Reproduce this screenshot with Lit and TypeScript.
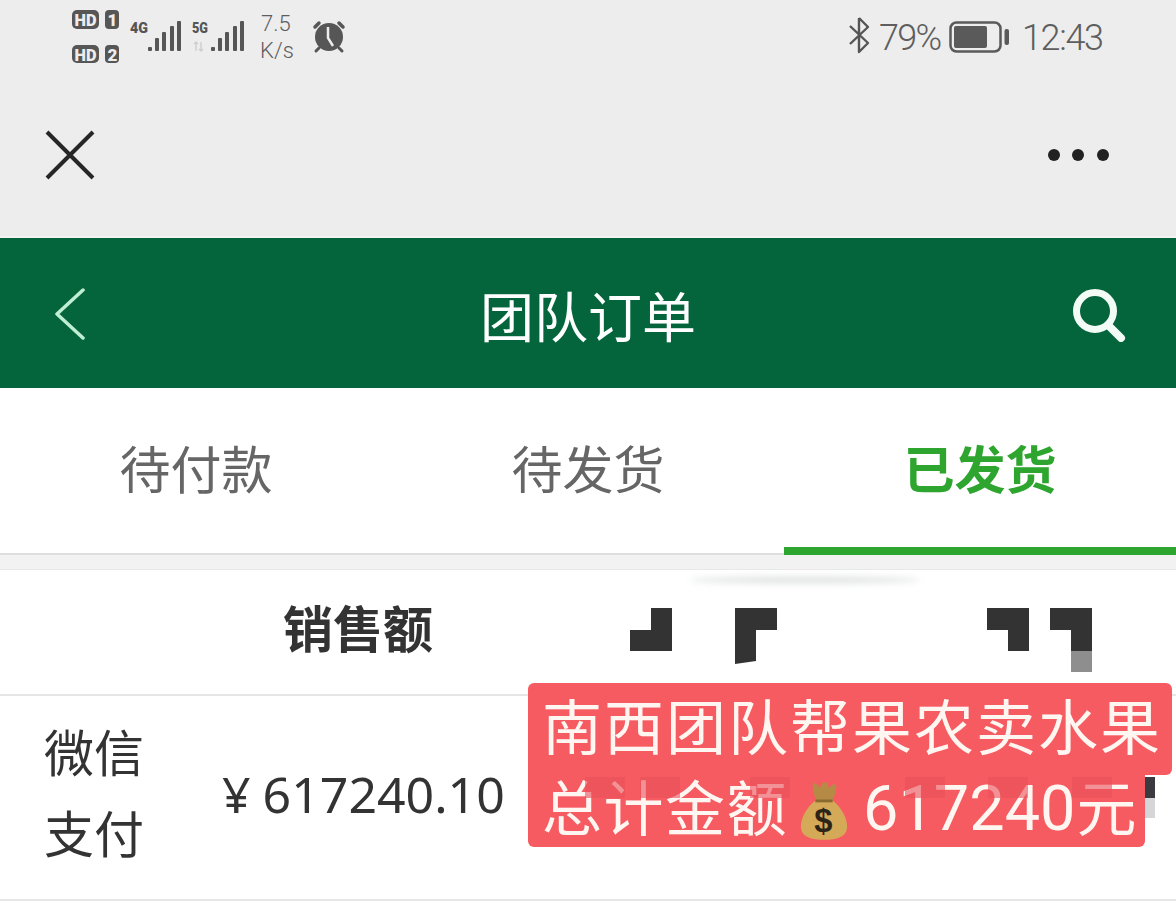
import { LitElement, html, css, svg } from "lit";
import { customElement } from "lit/decorators.js";

const bars = (x0: number) => [
  [0, 47], [7, 38], [14, 32], [22, 26], [29, 21],
].map(([dx, top]) => svg`<rect x=${x0 + dx} y=${top} width="4" height=${51 - top} rx="1" fill="#565656"/>`);

@customElement("app-root")
export class AppRoot extends LitElement {
  static styles = css`
    :host { display: block; width: 1176px; height: 903px; overflow: hidden; position: relative; background: #fff;
      font-family: "Noto Sans CJK SC", "Noto Sans", sans-serif; }
    .status { height: 87px; background: #ededed; position: relative; display: flex; color: #5a5a5a; }
    .status svg.full { width: 1176px; height: 87px; display: block; }
    .status text { font-family: Roboto, sans-serif; fill: #5e5e5e; }
    .status .hd { font-weight: 900; fill: #ededed; font-size: 17px; }
    .status .net { font-weight: 900; font-size: 15px; fill: #555; }
    .status .speed { font-weight: 300; font-size: 22px; }
    .status .big { font-weight: 300; font-size: 36px; }
    .nav { height: 151px; background: #ededed; display: flex; align-items: center; justify-content: space-between; padding: 0 67px 13px 44px; box-sizing: border-box; border-bottom: 2px solid #f1f4f2; }
    .nav svg { display: block; }
    .head { height: 150px; background: #04653c; display: grid; grid-template-columns: 1fr auto 1fr; align-items: center; padding: 0 50px; color: #fff; }
    .head h1 { margin: 3px 0 0; font-size: 54px; line-height: 60px; font-weight: 400; }
    .head svg { display: block; }
    .head .back { margin: 1px 0 0 2px; }
    .head .search { justify-self: end; margin-top: 3px; }
    .tabs { height: 167px; display: grid; grid-template-columns: repeat(3, 1fr); background: #fff; border-bottom: 2px solid #dedede; box-sizing: border-box; }
    .tab { display: flex; align-items: center; justify-content: center; font-size: 51px; color: #666; padding-bottom: 8px; box-sizing: border-box; }
    .tab.on { color: #2ea52f; font-weight: 700; border-bottom: 8px solid #2ea52f; margin-bottom: -2px; padding-bottom: 2px; height: 167px; }
    .gap { height: 15px; background: #f2f2f2; border-bottom: 1px solid #e8e8e8; box-sizing: border-box; }
    .sum { height: 126px; display: flex; align-items: center; padding-left: 283px; border-bottom: 2px solid #e6e6e6; box-sizing: border-box; position: relative; }
    .sum b { font-size: 50px; line-height: 60px; color: #333; font-weight: 700; margin-top: -13px; }
    .smudge { position: absolute; left: 690px; top: 6px; width: 230px; height: 8px; background: #e4e6e6; border-radius: 50%; filter: blur(3px); }
    .blocks { position: absolute; left: 630px; top: 38px; display: block; }
    .row { height: 205px; display: flex; align-items: center; padding: 0 0 10px 44px; border-bottom: 2px solid #e6e6e6; box-sizing: border-box; }
    .pay { font-size: 50px; line-height: 81px; color: #333; width: 178px; flex: none; margin-top: -4px; }
    .amt { font-family: "Noto Sans", sans-serif; font-size: 50px; color: #333; line-height: 60px; white-space: nowrap; margin-top: 2px; }
    .amt i { font-style: normal; margin-right: 12px; }
    .note { position: absolute; left: 528px; top: 683px; display: flex; flex-direction: column; align-items: flex-start; }
    .bar { background: #f65b61; color: #fff6f2; font-size: 60px; letter-spacing: 2px; white-space: nowrap; display: flex; align-items: center; padding: 0 6px 0 14px; box-sizing: border-box; border-radius: 6px; }
    .bar.a { width: 644px; height: 92px; border-bottom-left-radius: 0; padding-bottom: 12px; }
    .bar.b { width: 617px; height: 72px; border-top-left-radius: 0; border-top-right-radius: 0; position: relative; letter-spacing: 1.5px; padding-bottom: 14px; }
    .bar.b span.n { font-family: Roboto, sans-serif; font-weight: 400; font-size: 63px; letter-spacing: 0; margin: 8px 1px 0 15px; }
    .bar svg { flex: none; margin: 14px 0 0 12px; }
    .bar text { font-family: "Liberation Sans", sans-serif; font-weight: 700; font-size: 34px; fill: #2d2418; }
    .patch { position: absolute; top: 2px; height: 21px; background: #ea5058; opacity: .6; }
    .stub { position: absolute; left: 617px; top: 2px; width: 10px; height: 41px; background: linear-gradient(#3a3a40 50%, #d6d6d8 50%); }
  `;

  render() {
    return html`
      <div class="status">
        <svg class="full" viewBox="0 0 1176 87">
          <rect x="72" y="10" width="27" height="19" rx="5" fill="#565656"/>
          <text x="74.5" y="25.500" class="hd" textLength="22" lengthAdjust="spacingAndGlyphs">HD</text>
          <rect x="105" y="10" width="14" height="19" rx="4" fill="#565656"/>
          <text x="107.500" y="25.500" class="hd">1</text>
          <rect x="72" y="45" width="27" height="18" rx="5" fill="#565656"/>
          <text x="74.5" y="60.500" class="hd" textLength="22" lengthAdjust="spacingAndGlyphs">HD</text>
          <rect x="105" y="45" width="14" height="18" rx="4" fill="#565656"/>
          <text x="107.500" y="60.500" class="hd">2</text>
          <text x="130" y="33" class="net" textLength="18" lengthAdjust="spacingAndGlyphs">4G</text>
          ${bars(148)}
          <text x="192" y="33" class="net" textLength="16" lengthAdjust="spacingAndGlyphs">5G</text>
          ${bars(211)}
          <path d="M196 42v9M194 44l2-2 2 2M201 51v-9M199 49l2 2 2-2" stroke="#cfcfcf" stroke-width="1.5" fill="none"/>
          <text x="261" y="31" class="speed">7.5</text>
          <text x="260" y="58" class="speed">K/s</text>
          <path d="M315 27l4-4M343 27l-4-4" stroke="#565656" stroke-width="3.5" stroke-linecap="round"/>
          <path d="M319 48l-3 3M339 48l3 3" stroke="#565656" stroke-width="3" stroke-linecap="round"/>
          <circle cx="329" cy="37" r="14" fill="#565656"/>
          <path d="M328 27v11l5 8" stroke="#ededed" stroke-width="2.5" fill="none"/>
          <path d="M859 18v34l9-9-18-17M859 18l9 9-18 17" stroke="#555" stroke-width="2.4" fill="none" stroke-linejoin="round"/>
          <text x="879" y="50" class="big" textLength="63">79%</text>
          <rect x="950.5" y="22.500" width="50" height="29" rx="6" fill="none" stroke="#5a5a5a" stroke-width="2.500"/>
          <rect x="954" y="26" width="33" height="22" rx="2" fill="#5a5a5a"/>
          <rect x="1004.500" y="29" width="4.500" height="16" rx="2" fill="#5a5a5a"/>
          <text x="1022" y="50" class="big" textLength="82">12:43</text>
        </svg>
      </div>
      <div class="nav">
        <svg width="52" height="52" viewBox="0 0 52 52"><path d="M3 3l46 46M49 3L3 49" stroke="#262626" stroke-width="4" fill="none"/></svg>
        <svg width="62" height="14" viewBox="0 0 62 14"><circle cx="7" cy="7" r="6" fill="#222"/><circle cx="31" cy="7" r="6" fill="#222"/><circle cx="56" cy="7" r="6" fill="#222"/></svg>
      </div>
      <header class="head">
        <svg class="back" width="36" height="52" viewBox="0 0 36 52"><path d="M31 2L5 26l26 24" stroke="#bfeed3" stroke-width="3.500" fill="none" stroke-linecap="round" stroke-linejoin="round"/></svg>
        <h1>团队订单</h1>
        <svg class="search" width="54" height="54" viewBox="0 0 54 54"><circle cx="23" cy="23" r="18.500" stroke="#f2fbf6" stroke-width="7" fill="none"/><path d="M37 38l12 12" stroke="#f2fbf6" stroke-width="8" stroke-linecap="round"/></svg>
      </header>
      <nav class="tabs">
        <div class="tab">待付款</div>
        <div class="tab">待发货</div>
        <div class="tab on">已发货</div>
      </nav>
      <div class="gap"></div>
      <div class="sum">
        <b>销售额</b>
        <span class="smudge"></span>
        <svg class="blocks" width="462" height="64" viewBox="0 0 462 64">
          <path d="M21 0h21v43H0V22h21z" fill="#333"/>
          <path d="M105 0h42v22h-21v31l-21 3z" fill="#333"/>
          <path d="M357 0h42v43h-21V22h-21z" fill="#333"/>
          <path d="M420 0h42v43h-21V22h-21z" fill="#333"/>
          <rect x="441" y="43" width="21" height="21" fill="#8e8e8e"/>
        </svg>
      </div>
      <div class="row">
        <div class="pay">微信<br />支付</div>
        <div class="amt"><i>¥</i>617240.10</div>
      </div>
      <div class="note">
        <div class="bar a">南西团队帮果农卖水果</div>
        <div class="bar b">
          <span class="patch" style="left:57px;width:40px"></span>
          <span class="patch" style="left:112px;width:40px"></span>
          <span class="patch" style="left:222px;width:40px"></span>
          <span class="patch" style="left:377px;width:40px"></span>
          <span class="patch" style="left:460px;width:40px"></span>
          <span class="patch" style="left:544px;width:40px"></span>
          <span class="stub"></span>
          总计金额<svg width="48" height="62" viewBox="0 0 50 62">
            <path d="M17 20C14 12 12 5 14 2c3-1 5 3 7 5 1-4 2-6 5-6s3 3 4 6c2-2 5-5 7-4 2 3 0 10-3 17z" fill="#b58a45"/>
            <path d="M16 20h18C44 28 50 40 49 49c-1 9-11 12-24 12S2 58 1 49c-1-9 5-21 15-29z" fill="#d4aa58"/>
            <path d="M16 19h18v3H16z" fill="#8b6a30"/>
            <text x="25" y="53" text-anchor="middle">$</text>
          </svg><span class="n">617240</span>元
        </div>
      </div>
    `;
  }
}
